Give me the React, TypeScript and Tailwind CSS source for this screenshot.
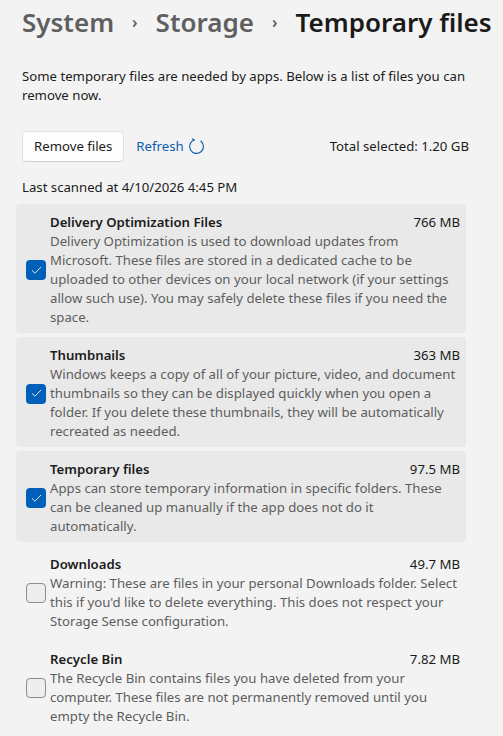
import { Check } from 'lucide-react'

interface FileItem {
  name: string
  size: string
  description: string
  checked: boolean
}

const items: FileItem[] = [
  {
    name: 'Delivery Optimization Files',
    size: '766 MB',
    description:
      'Delivery Optimization is used to download updates from Microsoft. These files are stored in a dedicated cache to be uploaded to other devices on your local network (if your settings allow such use). You may safely delete these files if you need the space.',
    checked: true,
  },
  {
    name: 'Thumbnails',
    size: '363 MB',
    description:
      'Windows keeps a copy of all of your picture, video, and document thumbnails so they can be displayed quickly when you open a folder. If you delete these thumbnails, they will be automatically recreated as needed.',
    checked: true,
  },
  {
    name: 'Temporary files',
    size: '97.5 MB',
    description:
      'Apps can store temporary information in specific folders. These can be cleaned up manually if the app does not do it automatically.',
    checked: true,
  },
  {
    name: 'Downloads',
    size: '49.7 MB',
    description:
      "Warning: These are files in your personal Downloads folder. Select this if you'd like to delete everything. This does not respect your Storage Sense configuration.",
    checked: false,
  },
  {
    name: 'Recycle Bin',
    size: '7.82 MB',
    description:
      'The Recycle Bin contains files you have deleted from your computer. These files are not permanently removed until you empty the Recycle Bin.',
    checked: false,
  },
]

function RefreshIcon() {
  return (
    <svg width="17" height="17" viewBox="0 0 16 16" fill="none" stroke="currentColor" strokeWidth="1.1" strokeLinecap="round">
      <path d="M5.8 1.9 A6.5 6.5 0 1 0 12.2 3" />
      <path d="M5.8 1.9 L4.1 0.9" />
    </svg>
  )
}

function Checkbox({ checked }: { checked: boolean }) {
  return checked ? (
    <div className="w-5 h-5 shrink-0 rounded-[4px] bg-[#005fb8] flex items-center justify-center">
      <Check className="w-[13px] h-[13px] text-white" strokeWidth={1.6} />
    </div>
  ) : (
    <div className="w-5 h-5 shrink-0 rounded-[4px] border border-[#8d8d8d] bg-[#ededed]" />
  )
}

function FileRow({ item }: { item: FileItem }) {
  return (
    <div className={`flex items-center pl-[10px] pr-[6px] pt-[9px] pb-[6px] rounded-[4px] ${item.checked ? 'bg-[#e9e9e9]' : ''}`}>
      <Checkbox checked={item.checked} />
      <div className="flex-1 ml-[4px]">
        <div className="flex justify-between leading-[19px]">
          <span className="font-semibold text-[#1b1b1b]">{item.name}</span>
          <span className="text-[#1b1b1b]">{item.size}</span>
        </div>
        <p className="text-[#5d5d5d] leading-[19px]">{item.description}</p>
      </div>
    </div>
  )
}

export default function App() {
  return (
    <div className="min-h-screen bg-[#f3f3f3] font-['Noto_Sans',sans-serif] text-[13.2px] text-[#1b1b1b]">
      {/* Breadcrumb header */}
      <div className="pl-[22px] pt-[2px] flex items-center whitespace-nowrap text-[26px] font-semibold leading-[40px]">
        <span className="text-[#5f5f5f]">System</span>
        <span className="text-[#5f5f5f] text-[16px] mx-[18px]">›</span>
        <span className="text-[#5f5f5f]">Storage</span>
        <span className="text-[#5f5f5f] text-[16px] mx-[18px]">›</span>
        <span className="text-[#1a1a1a]">Temporary files</span>
      </div>

      <div className="pl-[22px] pr-[34px]">
        <p className="mt-[25px] leading-[19px]">
          Some temporary files are needed by apps. Below is a list of files you can remove now.
        </p>

        {/* Actions */}
        <div className="mt-[26px] flex items-center">
          <button className="h-[31px] px-[11px] bg-[#fdfdfd] border border-[#e2e2e2] border-b-[#cfcfcf] rounded-[4px] text-[#1b1b1b]">
            Remove files
          </button>
          <button className="ml-[12px] flex items-center gap-[4px] text-[#0b5cad]">
            <span>Refresh</span>
            <RefreshIcon />
          </button>
          <span className="ml-auto">Total selected: 1.20 GB</span>
        </div>

        <p className="mt-[16px] leading-[19px]">Last scanned at 4/10/2026 4:45 PM</p>
      </div>

      {/* File list */}
      <div className="mt-[7px] pl-[16px] pr-[37px] flex flex-col gap-[4px]">
        {items.map((item) => (
          <FileRow key={item.name} item={item} />
        ))}
      </div>
    </div>
  )
}
